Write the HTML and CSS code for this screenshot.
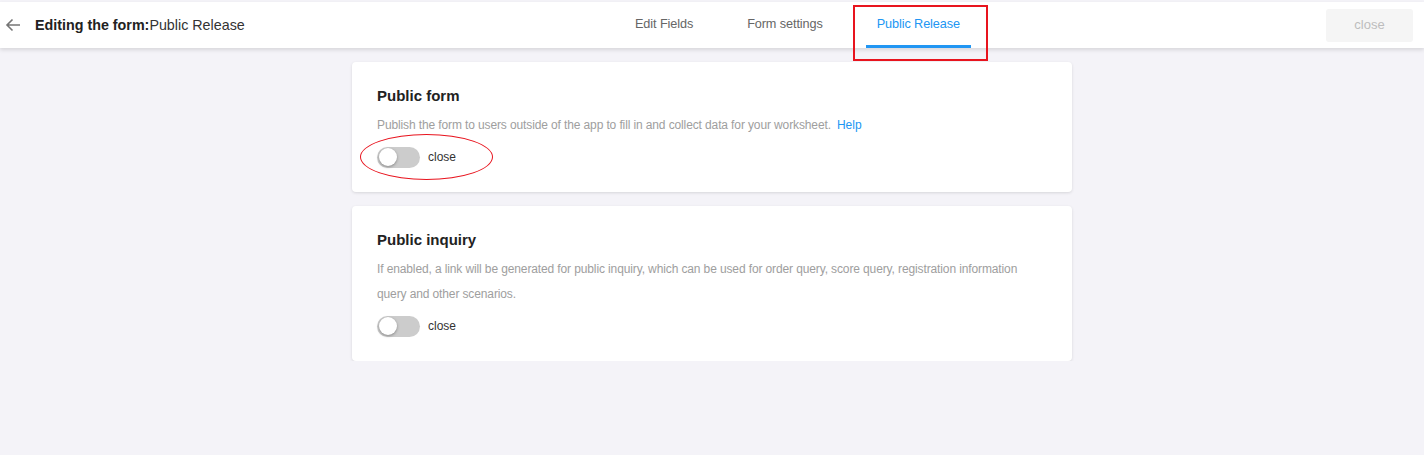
FILE: index.html
```html
<!DOCTYPE html>
<html>
<head>
    <title>Editing the form: Public Release</title>
    <meta name="viewport" content="width=device-width, initial-scale=1.0">
    <link rel="stylesheet" href="styles.css">
</head>
<body>
    <div class="header">
        <div class="header-left">
            <span class="back">
                <svg width="16" height="16" viewBox="0 0 16 16">
                    <path d="M15 8H2M7.5 2.5L2 8l5.5 5.5" fill="none" stroke="#757575" stroke-width="1.6"/>
                </svg>
            </span>
            <span class="title"><b>Editing the form:</b>Public Release</span>
        </div>
        <div class="tabs">
            <div class="tab">Edit Fields</div>
            <div class="tab">Form settings</div>
            <div class="tab active">Public Release</div>
            <div class="mark-box"></div>
        </div>
        <div class="header-right">
            <button class="close-btn">close</button>
        </div>
    </div>

    <div class="content">
        <div class="card">
            <h3>Public form</h3>
            <p class="desc">Publish the form to users outside of the app to fill in and collect data for your worksheet.<a class="help" href="#">Help</a></p>
            <div class="switch-row">
                <span class="switch"><span class="knob"></span></span>
                <span class="switch-text">close</span>
                <div class="mark-ellipse"></div>
            </div>
        </div>

        <div class="card">
            <h3>Public inquiry</h3>
            <p class="desc">If enabled, a link will be generated for public inquiry, which can be used for order query, score query, registration information query and other scenarios.</p>
            <div class="switch-row">
                <span class="switch"><span class="knob"></span></span>
                <span class="switch-text">close</span>
            </div>
        </div>
    </div>
</body>
</html>
```

FILE: styles.css
```css
body {
    margin: 0;
    font-family: "Liberation Sans", Arial, sans-serif;
    background-color: #f4f3f8;
    color: #333;
}

.header {
    display: flex;
    align-items: center;
    height: 46px;
    margin-top: 2px;
    background: white;
    box-shadow: 0 2px 4px rgba(0,0,0,0.12);
}

.header-left {
    flex: none;
    width: 608px;
    display: flex;
    align-items: center;
}

.back {
    display: flex;
    margin-left: 5px;
    margin-right: 14px;
}

.title {
    font-size: 14.3px;
    color: #333;
}

.title b {
    color: #222;
}

.tabs {
    position: relative;
    display: flex;
    height: 46px;
}

.tab {
    position: relative;
    padding: 0 27px;
    line-height: 45px;
    font-size: 12.7px;
    letter-spacing: -0.1px;
    color: #666;
}

.tab.active {
    color: #2196f3;
    padding: 0 11px;
    margin-left: 16px;
}

.tab.active::after {
    content: "";
    position: absolute;
    left: 0;
    right: 0;
    bottom: 0;
    height: 3px;
    background: #2196f3;
}

.mark-box {
    position: absolute;
    right: -17px;
    top: 3px;
    width: 131px;
    height: 52px;
    border: 2px solid #e8141e;
}

.header-right {
    flex: 1;
    display: flex;
    justify-content: flex-end;
    padding-right: 11px;
}

.close-btn {
    width: 87px;
    height: 33px;
    border: none;
    border-radius: 3px;
    background: #f5f5f5;
    color: #bdbdbd;
    font-family: inherit;
    font-size: 13px;
    padding: 0 0 1px;
}

.content {
    width: 720px;
    margin: 14px auto 0;
    display: flex;
    flex-direction: column;
    gap: 14px;
}

.card {
    background: white;
    border-radius: 4px;
    box-shadow: 0 1px 3px rgba(0,0,0,0.12);
    padding: 24px 25px 24px;
}

h3 {
    margin: 0;
    font-size: 15px;
    line-height: 19px;
    color: #222;
}

.desc {
    margin: 8px 0 0;
    font-size: 12px;
    letter-spacing: -0.12px;
    line-height: 25px;
    color: #9e9e9e;
}

.help {
    color: #2196f3;
    text-decoration: none;
    margin-left: 6px;
    letter-spacing: 0;
}

.switch-row {
    position: relative;
    display: flex;
    align-items: center;
    margin-top: 8px;
    height: 22px;
}

.switch {
    position: relative;
    width: 43px;
    height: 21px;
    border-radius: 11px;
    background: #cccccc;
}

.knob {
    position: absolute;
    left: 2px;
    top: 1.5px;
    width: 18px;
    height: 18px;
    border-radius: 50%;
    background: white;
    box-shadow: 0 1px 3px rgba(0,0,0,0.35);
}

.switch-text {
    margin-left: 8px;
    font-size: 12px;
    color: #333;
}

.mark-ellipse {
    position: absolute;
    left: -17px;
    top: -12px;
    width: 131px;
    height: 44px;
    border: 1.5px solid #e8141e;
    border-radius: 50%;
}
```
